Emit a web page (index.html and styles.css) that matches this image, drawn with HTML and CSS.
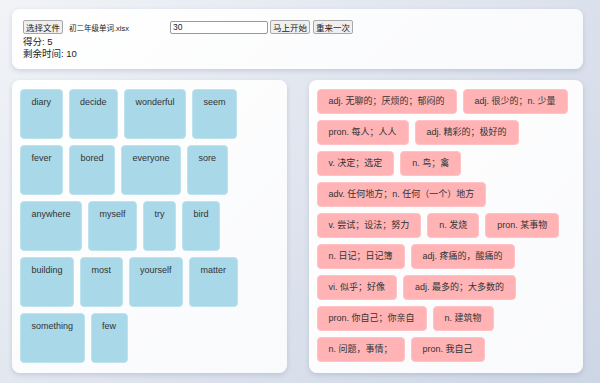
FILE: index.html
```html
<html>
<head>
	<title>单词配对</title>
	<meta charset="UTF-8">
	<link rel="stylesheet" href="styles.css">
</head>
<body>

	<div class="page">

		<div class="panel top-panel">
			<div class="controls">
				<span class="file-pick">
					<button class="btn">选择文件</button>
					<span class="file-name">初二年级单词.xlsx</span>
				</span>
				<input class="time-input" type="text" value="30">
				<button class="btn">马上开始</button>
				<button class="btn">重来一次</button>
			</div>
			<div class="info">得分: 5</div>
			<div class="info">剩余时间: 10</div>
		</div>

		<div class="boards">
			<div class="panel board">
				<div class="word">diary</div>
				<div class="word">decide</div>
				<div class="word">wonderful</div>
				<div class="word">seem</div>
				<div class="word">fever</div>
				<div class="word">bored</div>
				<div class="word">everyone</div>
				<div class="word">sore</div>
				<div class="word">anywhere</div>
				<div class="word">myself</div>
				<div class="word">try</div>
				<div class="word">bird</div>
				<div class="word">building</div>
				<div class="word">most</div>
				<div class="word">yourself</div>
				<div class="word">matter</div>
				<div class="word">something</div>
				<div class="word">few</div>
			</div>

			<div class="panel board">
				<div class="meaning">adj. 无聊的；厌烦的；郁闷的</div>
				<div class="meaning">adj. 很少的；n. 少量</div>
				<div class="meaning">pron. 每人；人人</div>
				<div class="meaning">adj. 精彩的；极好的</div>
				<div class="meaning">v. 决定；选定</div>
				<div class="meaning">n. 鸟；禽</div>
				<div class="meaning">adv. 任何地方；n. 任何（一个）地方</div>
				<div class="meaning">v. 尝试；设法；努力</div>
				<div class="meaning">n. 发烧</div>
				<div class="meaning">pron. 某事物</div>
				<div class="meaning">n. 日记；日记簿</div>
				<div class="meaning">adj. 疼痛的，酸痛的</div>
				<div class="meaning">vi. 似乎；好像</div>
				<div class="meaning">adj. 最多的；大多数的</div>
				<div class="meaning">pron. 你自己；你亲自</div>
				<div class="meaning">n. 建筑物</div>
				<div class="meaning">n. 问题，事情；</div>
				<div class="meaning">pron. 我自己</div>
			</div>
		</div>

	</div>

</body>
</html>
```

FILE: styles.css
```css
* {
	margin: 0;
	padding: 0;
	box-sizing: border-box;
}

body {
	width: 600px;
	height: 383px;
	overflow: hidden;
	font-family: "Liberation Sans", "Noto Sans CJK SC", sans-serif;
	color: #333;
	background: linear-gradient(135deg, #f1f3f7 0%, #dfe4ee 50%, #cdd6e5 100%);
}

.page {
	width: 571px;
	margin: 9px 0 0 12px;
}

.panel {
	background: linear-gradient(135deg, #ffffff 0%, #f9fafc 100%);
	border-radius: 8px;
	box-shadow: 0 2px 5px rgba(60, 80, 120, 0.18);
}

.top-panel {
	height: 60px;
	padding: 11px 11px;
	font-size: 9.5px;
	color: #222;
}

.controls {
	display: flex;
	align-items: center;
	height: 14px;
	margin-bottom: 2px;
}

.file-pick {
	display: flex;
	align-items: center;
	width: 147px;
}

.file-name {
	margin-left: 3px;
	font-size: 7.5px;
}

.btn {
	height: 14px;
	padding: 0 2px;
	font-family: "Liberation Sans", "Noto Sans CJK SC", sans-serif;
	font-size: 8.5px;
	color: #222;
	background: #efefef;
	border: 1px solid #a8a8a8;
	border-radius: 2px;
	margin-right: 3px;
}

.time-input {
	width: 98px;
	height: 13px;
	padding: 0 2px;
	font-family: "Liberation Sans", sans-serif;
	font-size: 8.5px;
	color: #222;
	border: 1px solid #9a9a9a;
	border-radius: 2px;
	margin-right: 2px;
}

.info {
	line-height: 12px;
}

.boards {
	display: flex;
	gap: 22px;
	margin-top: 11px;
	height: 293px;
}

.board {
	flex: 1;
	display: flex;
	flex-wrap: wrap;
	align-content: flex-start;
	gap: 6px;
	padding: 9px 7px 9px 8px;
}

.word {
	height: 50px;
	padding: 7px 10.5px 0;
	font-size: 9px;
	line-height: 10px;
	text-align: center;
	color: #333;
	background: #a9d8e9;
	border: 1px solid #bfe2ef;
	border-radius: 4px;
}

.meaning {
	height: 25px;
	padding: 0 11px;
	font-size: 9px;
	line-height: 23px;
	color: #333;
	background: #ffb3b5;
	border: 1px solid #ffc3c5;
	border-radius: 4px;
}
```
